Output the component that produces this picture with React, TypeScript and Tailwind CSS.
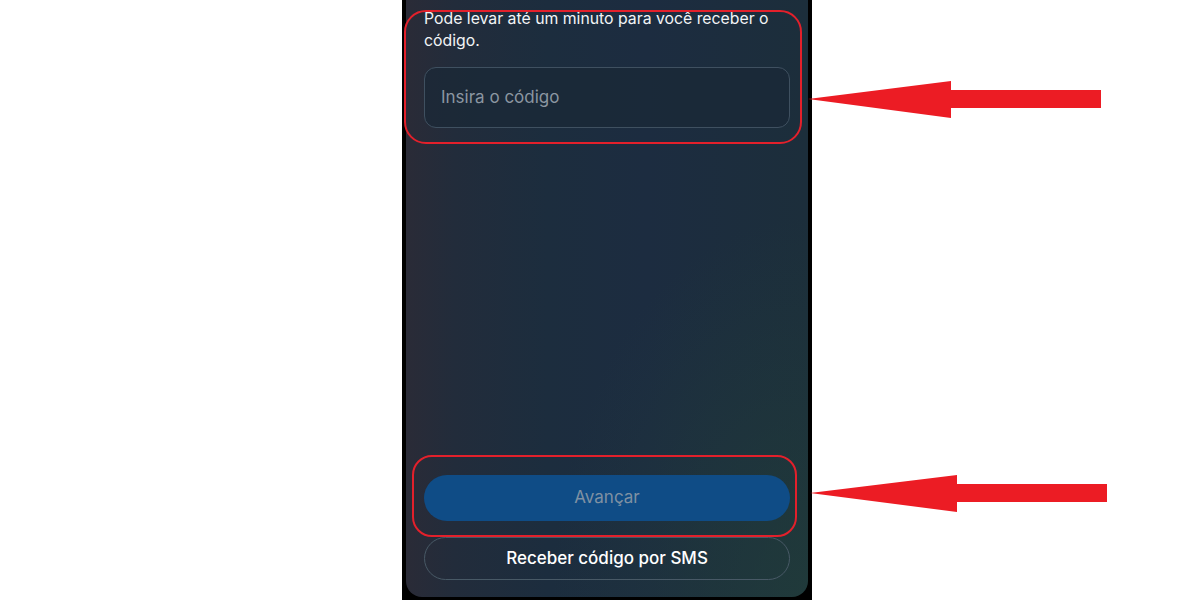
export default function App() {
  return (
    <div className="relative w-[1200px] h-[600px] bg-white overflow-hidden font-['Inter','Noto_Sans',sans-serif]">
      {/* phone frame */}
      <div className="ml-[402px] w-[410px] h-[600px] bg-black px-[4px] pb-[3px] flex flex-col">
        <div className="flex-1 flex flex-col rounded-b-[16px] px-[18px] pt-[8px] pb-[17px] bg-[radial-gradient(ellipse_at_100%_100%,rgba(34,64,58,0.65)_0%,rgba(34,64,58,0)_45%),linear-gradient(90deg,#2a2b37_0%,#222c3b_12%,#1c2d3e_35%,#1c2c40_60%,#1c2e3b_100%)]">
          <p className="text-[#f2f4f6] text-[15.8px] leading-[22px]">
            Pode levar até um minuto para você receber o código.
          </p>

          <div className="mt-[15px] h-[61px] rounded-[12px] border border-[#3f5060] bg-[#1a2836]/70 flex items-center px-[16px]">
            <span className="text-[#8b96a1] text-[17px]">Insira o código</span>
          </div>

          <div className="flex-1" />

          <button className="h-[46px] rounded-full bg-[#0f4c86] text-[#7f91a3] text-[17px]">
            Avançar
          </button>
          <button className="mt-[16px] h-[43px] rounded-full border border-[#485966] text-white text-[17px] font-medium">
            Receber código por SMS
          </button>
        </div>
      </div>

      {/* annotations */}
      <div className="absolute left-[404px] top-[10px] w-[398px] h-[134px] rounded-[22px] border-2 border-[#e3202b]" />
      <div className="absolute left-[412px] top-[455px] w-[385px] h-[82px] rounded-[20px] border-2 border-[#e3202b]" />

      <svg className="absolute left-0 top-0" width="1200" height="600" viewBox="0 0 1200 600">
        <polygon
          points="808,99 951,81 951,90 1101,90 1101,108 951,108 951,118"
          fill="#ec1c24"
        />
        <polygon
          points="810,493 957,475 957,484 1107,484 1107,502 957,502 957,512"
          fill="#ec1c24"
        />
      </svg>
    </div>
  );
}
